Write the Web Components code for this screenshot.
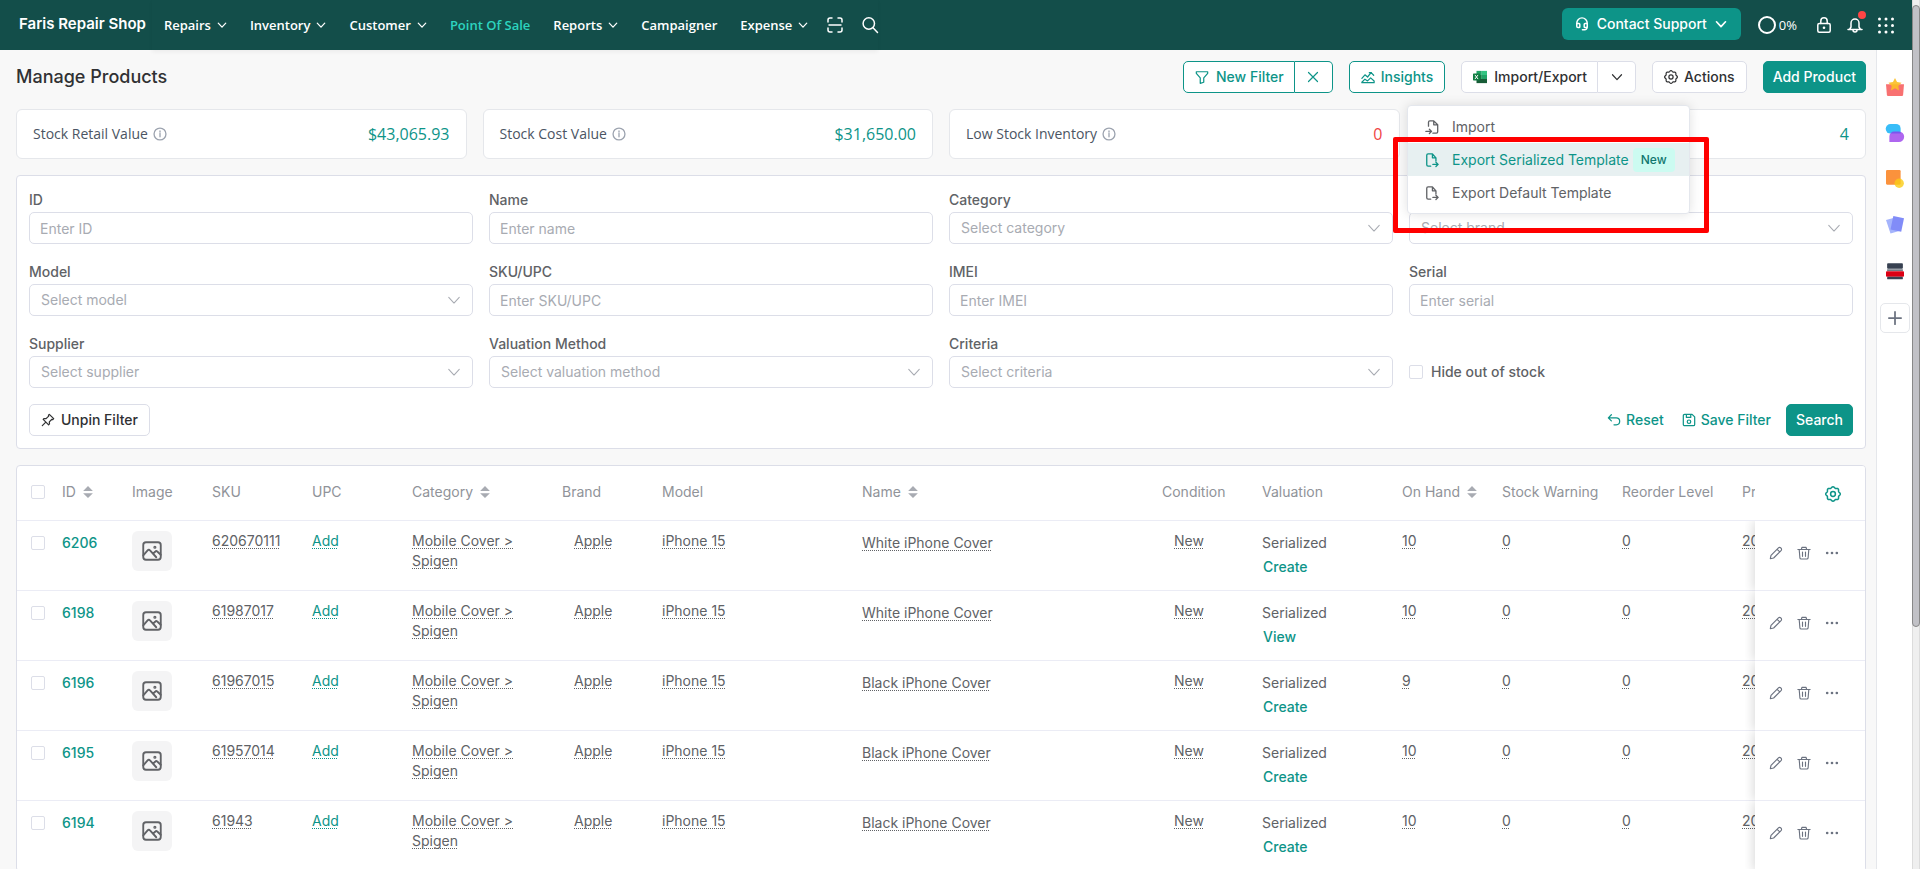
<!DOCTYPE html>
<html lang="en">
<head>
<meta charset="utf-8">
<title>Manage Products</title>
<style>
:root {
  --teal: #0d9488; --head: #134e4a; --line: #dcdee8; --soft: #ebecf5;
  --ink: #303133; --text: #606266; --mute: #909399; --hint: #a8abb2; --page: #f8f8f8;
  --nav-font: "Open Sans", sans-serif;
}
body { margin: 0; font: 14px/20px Inter, sans-serif; color: var(--text); }
</style>
</head>
<body>
<app-shell>
  <app-header slot="header"></app-header>
  <page-toolbar></page-toolbar>
  <stat-row>
    <stat-card label="Stock Retail Value" value="$43,065.93"></stat-card>
    <stat-card label="Stock Cost Value" value="$31,650.00"></stat-card>
    <stat-card label="Low Stock Inventory" value="0" alert></stat-card>
    <stat-card value="4"></stat-card>
  </stat-row>
  <filter-panel></filter-panel>
  <product-table></product-table>
  <app-rail slot="rail"></app-rail>
</app-shell>

<script>
const define = (tag, html, setup) => {
  const tpl = document.createElement('template');
  tpl.innerHTML = '<style>:host,*{box-sizing:border-box}button,input,select{font:inherit;color:inherit;margin:0}button{cursor:pointer}</style>' + html;
  customElements.define(tag, class extends HTMLElement {
    constructor() {
      super();
      this.attachShadow({ mode: 'open' });
    }
    connectedCallback() {
      if (this.shadowRoot.childNodes.length) return;
      this.shadowRoot.append(tpl.content.cloneNode(true));
      if (setup) setup(this, this.shadowRoot);
    }
  });
};

/* wavy outline for the gear */
const gear = (() => {
  let d = '';
  for (let i = 0; i < 72; i++) {
    const a = i * Math.PI / 36, r = 6.7 + 0.6 * Math.cos(8 * a);
    d += (i ? 'L' : 'M') + (8 + r * Math.cos(a)).toFixed(2) + ' ' + (8 + r * Math.sin(a)).toFixed(2);
  }
  return d + 'Z';
})();

const ICONS = {
  down: '<path d="M2 5l6 6.500 6-6.500"/>',
  x: '<path d="M2 2l12 12M14 2l-12 12"/>',
  plus: '<path d="M8 1v14M1 8h14"/>',
  info: '<circle cx="8" cy="8" r="6.800"/><path d="M8 7.200v4M8 4.500v1.200"/>',
  scan: '<path d="M1 5V3a2 2 0 0 1 2-2h2M11 1h2a2 2 0 0 1 2 2v2M15 11v2a2 2 0 0 1-2 2h-2M5 15H3a2 2 0 0 1-2-2v-2M2 8h12"/>',
  search: '<circle cx="6.800" cy="6.500" r="5.700"/><path d="M11 10.700l4.500 4.800"/>',
  funnel: '<path d="M1.500 2h13v1.800L10 9v5l-4 1.200V9L1.500 3.800z"/>',
  chart: '<path d="M1 9.500l3.500-4 3 2.500L11.500 3l3 3M9.500 3h2.500M1 14l3.500-3.500 3 2L11 9l4 3.500v2H1zM1 14.500h14"/>',
  gear: '<path d="' + gear + '"/><circle cx="8" cy="8" r="2.400"/>',
  pin: '<path d="M9.500 1.500l5 5-1 1-1-.3-3 3 .2 2.300-1 1L2.500 7.300l1-1 2.300.2 3-3-.3-1zM5.500 10.500L1.500 14.500"/>',
  reset: '<path d="M5 2L1.500 5.500 5 9M2 5.500h8.500a4 4 0 0 1 0 8H8"/>',
  save: '<path d="M1.500 3a1.500 1.500 0 0 1 1.500-1.500h8.500l3 3V13a1.500 1.500 0 0 1-1.500 1.500H3A1.500 1.500 0 0 1 1.500 13zM5 1.500v3.500h5V1.500"/><circle cx="8" cy="10" r="2"/>',
  image: '<rect x="1" y="1" width="14" height="14" rx="2.200"/><path d="M1 11.500l3.500-4c.6-.7 1.300-.7 1.900 0l5 5.500M9 10l1.700-1.600c.5-.5 1-.4 1.500 0L15 11"/><circle cx="10.300" cy="5" r=".5"/>',
  pencil: '<path d="M1.500 14.500l.8-3.800 8.500-8.500a1.800 1.800 0 0 1 2.600 0l.4.400a1.800 1.800 0 0 1 0 2.600l-8.500 8.500zM9.300 3.800l3 3"/>',
  trash: '<path d="M1 4h14M5 4l.6-2.500h4.800L11 4M2.500 4l.8 9.500c.1.800.6 1.300 1.400 1.300h6.600c.8 0 1.300-.5 1.400-1.300l.8-9.500M6.300 6.800v5M9.700 6.800v5"/>',
  dots: '<g fill="currentColor" stroke="none"><circle cx="2.500" cy="8" r="1.500"/><circle cx="8" cy="8" r="1.500"/><circle cx="13.500" cy="8" r="1.500"/></g>',
  sort: '<g fill="currentColor" stroke="none"><path d="M8 0l6.500 6.500h-13zM8 16l6.500-6.500h-13z"/></g>',
  fileIn: '<path d="M4 7V2.500A1.500 1.500 0 0 1 5.500 1H10l4.500 4.500v8A1.500 1.500 0 0 1 13 15H9M10 1v4.500h4.500M1 13h6M5 10.500L7.500 13 5 15.500"/>',
  fileOut: '<path d="M6.500 15H3.500A1.500 1.500 0 0 1 2 13.500v-11A1.500 1.500 0 0 1 3.500 1H8.500l4 4.500V9M8.500 1v4.500h4M9 13h6M12.500 10.500L15 13l-2.500 2.500"/>',
  support: '<path d="M2 10V7a6 6 0 0 1 12 0v4.500a3 3 0 0 1-3 3H8.500M2 7.500h2.500a1 1 0 0 1 1 1V11a1 1 0 0 1-1 1H3.500A1.500 1.500 0 0 1 2 10.500zM14 7.500h-2.500a1 1 0 0 0-1 1V11a1 1 0 0 0 1 1h1a1.500 1.500 0 0 0 1.500-1.500z"/>',
  lock: '<rect x="1.800" y="6.500" width="12.400" height="8.700" rx="1.500"/><path d="M4.800 6.500V4a3.200 3.200 0 0 1 6.400 0v2.500"/><circle cx="8" cy="10.800" r="1.300" fill="currentColor" stroke="none"/>',
  bell: '<path d="M1 12.500h14M2.500 12.500L4 10V6a4 4 0 0 1 8 0v4l1.500 2.500M6 13a2 2 0 0 0 4 0"/>',
  apps: '<g fill="currentColor" stroke="none">' + [2, 8.500, 15].map(y => [1.5, 8, 14.500].map(x => '<circle cx="' + x + '" cy="' + y + '" r="1.500"/>').join('')).join('') + '</g>',
  excel: '<g stroke="none"><path fill="#21a366" d="M4 1h6v4.700H4z"/><path fill="#33c481" d="M10 1h6v4.700h-6z"/><path fill="#107c41" d="M4 5.700h6v4.600H4z"/><path fill="#21a366" d="M10 5.700h6v4.600h-6z"/><path fill="#185c37" d="M4 10.300h12V15H4z"/><rect fill="#107c41" x="0" y="4" width="8" height="8" rx=".8"/><path stroke="#fff" stroke-width="1.100" d="M2.500 6l3 4M5.500 6l-3 4"/></g>',
  gift: '<g stroke="none"><path fill="#f87171" d="M0 5.500h16l-.8 9.500q-.1 1-1 1H1.800q-.9 0-1-1z"/><path fill="#fbbf24" opacity=".9" d="M8 0l1.800 3.600 4 .6-2.900 2.800.7 4L8 9.100 4.400 11l.7-4L2.200 4.200l4-.6z"/></g>',
  chat: '<g stroke="none"><path fill="#38bdf8" d="M4 0h5a4 4 0 0 1 4 4v4.500H4A4.200 4.200 0 0 1 4 0z"/><path fill="#9333ea" opacity=".75" d="M3 16v-5a4.300 4.300 0 0 1 4.300-4.300h4.200a4.600 4.600 0 0 1 0 9.300z"/></g>',
  note: '<g stroke="none"><rect fill="#fb923c" width="13" height="13" rx="1"/><circle fill="#facc15" opacity=".8" cx="11.700" cy="11.800" r="4.200"/></g>',
  cards: '<g stroke="none"><path fill="#a5b4fc" d="M0 3.500L9 1l3.500 12L4 15.500z"/><path fill="#818cf8" d="M6.500 0L16 2l-2.500 12L4 12z"/></g>',
  stack: '<g stroke="none"><rect fill="#374151" x="1" y="1" width="14" height="5" rx=".8"/><rect fill="#4b5563" x="1" y="6.600" width="14" height="1.200"/><rect fill="#dc0014" x="0" y="8.300" width="16" height="4.700" rx=".8"/><rect fill="#374151" x="1" y="13.200" width="14" height="2.200" rx=".8"/></g>'
};
define('ui-icon', '<style>:host{display:inline-flex;flex:none;width:14px;height:14px}svg{width:100%;height:100%;fill:none;stroke:currentColor;stroke-width:var(--stroke,1.3);stroke-linecap:round;stroke-linejoin:round;overflow:visible}</style><svg viewBox="0 0 16 16" aria-hidden="true"></svg>',
  (el, root) => { root.querySelector('svg').innerHTML = ICONS[el.getAttribute('name')]; });

define('app-shell', `<style>
:host{display:grid;grid-template-columns:minmax(0,1fr) auto 8px;grid-template-rows:auto minmax(0,1fr);height:100vh;overflow:hidden;background:var(--page)}
slot[name=header]{display:block;grid-column:1/3}
main{display:flex;flex-direction:column;gap:16px;padding:11px 10px 0 16px;overflow:hidden}
slot[name=rail]{display:block}
.bar{grid-column:3;grid-row:1/3;background:#efefef;border:1px solid #dcdcdc;border-width:0 1px;padding-top:5px}
.thumb{height:72%;background:#c1c1c6;border:1px solid #888;border-radius:4px;margin:0 -1px}
</style>
<slot name="header"></slot><main><slot></slot></main><slot name="rail"></slot>
<div class="bar"><div class="thumb"></div></div>`);

define('nav-item', `<style>
:host{display:flex}
a{display:flex;align-items:center;gap:6px;color:#fff;text-decoration:none;font:600 13px/18px var(--nav-font);white-space:nowrap}
:host([active]) a{color:#2dd4bf}
ui-icon{width:10px;height:10px;--stroke:2}
</style><a href="#"><slot></slot><ui-icon name="down"></ui-icon></a>`,
  (el, root) => { if (!el.hasAttribute('menu')) root.querySelector('ui-icon').remove(); });

define('app-header', `<style>
:host{display:flex;align-items:stretch;height:50px;background:var(--head);color:#fff}
.brand{display:flex;align-items:center;padding:0 6px 2px 19px;color:#fff;text-decoration:none;font-size:15px;font-weight:600;white-space:nowrap}
nav{display:flex;align-items:center;gap:23px;padding:0 0 0 12px;box-shadow:0 2px 4px rgba(0,0,0,.05)}
.tool{display:flex;padding:0;border:0;background:none;color:#fff}
.tool ui-icon{width:16px;height:16px;--stroke:1.5}
nav .tool{margin-left:-4px}
.right{display:flex;align-items:center;gap:15px;margin-left:auto;padding-right:18px}
.support{display:flex;align-items:center;gap:8px;height:32px;margin:0 2px 2px 0;padding:0 14px 0 13px;border:0;border-radius:6px;background:var(--teal);color:#fff;font-weight:500}
.support ui-icon{--stroke:1.7}
.support ui-icon:last-child{width:12px;height:12px;--stroke:2.2}
.pct{display:flex;align-items:center;gap:3px;margin-right:4px;font:13px/18px var(--nav-font)}
.ring{width:18px;height:18px;border:2px solid #fff;border-radius:50%}
.bell{position:relative}
.bell i{position:absolute;top:-6px;right:-3px;width:8px;height:8px;border-radius:50%;background:#ff4545}
</style>
<a class="brand" href="#">Faris Repair Shop</a>
<nav>
<nav-item menu>Repairs</nav-item><nav-item menu>Inventory</nav-item><nav-item menu>Customer</nav-item>
<nav-item active>Point Of Sale</nav-item><nav-item menu>Reports</nav-item><nav-item>Campaigner</nav-item><nav-item menu>Expense</nav-item>
<button class="tool" aria-label="Scan"><ui-icon name="scan"></ui-icon></button>
<button class="tool" aria-label="Search"><ui-icon name="search"></ui-icon></button>
</nav>
<div class="right">
<button class="support"><ui-icon name="support"></ui-icon>Contact Support<ui-icon name="down"></ui-icon></button>
<span class="pct"><span class="ring"></span>0%</span>
<button class="tool" aria-label="Lock"><ui-icon name="lock"></ui-icon></button>
<button class="tool bell" aria-label="Notifications"><ui-icon name="bell"></ui-icon><i></i></button>
<button class="tool" aria-label="Apps"><ui-icon name="apps"></ui-icon></button>
</div>`);

/* variants: outline, plain (default), primary, text; group="start|end" joins two buttons */
define('ui-button', `<style>
:host{display:flex}
button{display:flex;align-items:center;justify-content:center;gap:6px;height:32px;padding:0 11px;border:1px solid var(--line);border-radius:5px;background:#fff;color:var(--ink);font-weight:500;white-space:nowrap}
::slotted(ui-icon){--stroke:1.4}
:host([variant=outline]) button{border-color:var(--teal);color:var(--teal)}
:host([variant=primary]) button{padding:0 9px;border-color:var(--teal);background:var(--teal);color:#fff}
:host([variant=text]) button{gap:5px;padding:0;border:0;background:none;color:var(--teal)}
:host([group=start]) button{gap:7px;border-radius:5px 0 0 5px;padding-right:10px}
:host([group=end]) button{width:38px;padding:0;border-left:0;border-radius:0 5px 5px 0}
</style><button><slot></slot></button>`,
  (el, root) => { const l = el.getAttribute('label'); if (l) root.querySelector('button').setAttribute('aria-label', l); });

define('export-menu', `<style>
:host{display:block;padding:4px 0;background:#fff;border:1px solid #e4e7ed;border-radius:4px;box-shadow:0 0 12px rgba(0,0,0,.12)}
button{display:flex;align-items:center;width:100%;height:33px;padding:0 16px 0 17px;border:0;background:none;color:var(--text);text-align:left;white-space:nowrap}
ui-icon{margin-right:13px;width:14px;height:14px;--stroke:1.5}
.on{background:#e7f0f1;color:var(--teal)}
.tag{margin-left:4px;padding:2px 8px;border-radius:4px;background:#ccfbf1;color:#0f766e;font-size:12px;font-weight:500}
.mark{position:absolute;left:-15px;right:-20px;top:31px;height:96px;border:5px solid #f00;border-radius:2px;pointer-events:none}
</style>
<button><ui-icon name="fileIn"></ui-icon>Import</button>
<button class="on"><ui-icon name="fileOut"></ui-icon>Export Serialized Template<span class="tag">New</span></button>
<button><ui-icon name="fileOut"></ui-icon>Export Default Template</button>
<div class="mark"></div>`);

define('page-toolbar', `<style>
:host{display:flex;align-items:center;justify-content:space-between}
h1{margin:0;font-size:18px;line-height:24px;font-weight:500;color:var(--ink)}
.acts,.group{display:flex}
.acts{gap:16px}
.group{position:relative}
export-menu{position:absolute;z-index:5;top:44px;right:-54px;width:283px}
.x{width:12px;height:12px;--stroke:1.6}
</style>
<h1>Manage Products</h1>
<div class="acts">
<div class="group"><ui-button variant="outline" group="start"><ui-icon name="funnel"></ui-icon>New Filter</ui-button><ui-button variant="outline" group="end" label="Clear filter"><ui-icon class="x" name="x"></ui-icon></ui-button></div>
<ui-button variant="outline"><ui-icon name="chart"></ui-icon>Insights</ui-button>
<div class="group"><ui-button group="start"><ui-icon name="excel"></ui-icon>Import/Export</ui-button><ui-button group="end" label="Import and export options"><ui-icon class="x" name="down"></ui-icon></ui-button><export-menu></export-menu></div>
<ui-button><ui-icon name="gear"></ui-icon>Actions</ui-button>
<ui-button variant="primary">Add Product</ui-button>
</div>`);

define('stat-row', '<style>:host{display:grid;grid-template-columns:repeat(4,minmax(0,1fr));gap:16px}</style><slot></slot>');
define('stat-card', `<style>
:host{display:flex;align-items:center;justify-content:space-between;height:50px;padding:0 16px;background:#fff;border:1px solid #e5e7eb;border-radius:6px;font-family:var(--nav-font)}
.label{display:flex;align-items:center;gap:5px;color:#4b5563}
ui-icon{color:#9ca3af;--stroke:1.5}
b{margin-left:auto;font-size:16px;font-weight:400;color:var(--teal)}
:host([alert]) b{color:#ef4444}
</style><span class="label"><span></span><ui-icon name="info"></ui-icon></span><b></b>`,
  (el, root) => {
    const l = el.getAttribute('label');
    if (l) root.querySelector('.label span').textContent = l; else root.querySelector('.label').remove();
    root.querySelector('b').textContent = el.getAttribute('value');
  });

const fieldCss = `<style>
:host{display:block}
label{display:block;line-height:24px;font-weight:500;color:var(--text)}
.box{display:grid;align-items:center}
.box>*{grid-area:1/1}
input,select{width:100%;height:32px;padding:0 10px;border:1px solid var(--line);border-radius:5px;background:#fff;outline:0}
select{appearance:none;padding:0 11px;color:var(--hint)}
input::placeholder{color:var(--hint);opacity:1}
ui-icon{justify-self:end;margin-right:12px;width:14px;height:14px;--stroke:1.2;color:var(--hint);pointer-events:none}
</style>`;
define('text-field', fieldCss + '<label for="f"></label><div class="box"><input id="f" type="text"></div>', (el, root) => {
  root.querySelector('label').textContent = el.getAttribute('label');
  root.querySelector('input').placeholder = el.getAttribute('hint');
});
define('select-field', fieldCss + '<label for="f"></label><div class="box"><select id="f"><option></option></select><ui-icon name="down"></ui-icon></div>', (el, root) => {
  root.querySelector('label').textContent = el.getAttribute('label');
  root.querySelector('option').textContent = el.getAttribute('hint');
});
const checkCss = 'input[type=checkbox]{appearance:none;flex:none;width:14px;height:14px;border:1px solid var(--line);border-radius:2px;background:#fff}';
define('check-field', `<style>:host{display:flex;align-items:center;height:32px;font-weight:500}label{display:flex;align-items:center;gap:8px}${checkCss}</style><label><input type="checkbox"><slot></slot></label>`);

define('filter-panel', `<style>
:host{display:block;padding:12px;background:#fff;border:1px solid var(--line);border-radius:4px}
form{display:grid;grid-template-columns:repeat(4,minmax(0,1fr));gap:16px;align-items:end}
.foot{display:flex;align-items:center;justify-content:space-between;margin-top:16px}
.foot div{display:flex;gap:15px}
.foot div ui-button:first-child{margin-right:3px}
</style>
<form>
<text-field label="ID" hint="Enter ID"></text-field><text-field label="Name" hint="Enter name"></text-field>
<select-field label="Category" hint="Select category"></select-field><select-field label="Brand" hint="Select brand"></select-field>
<select-field label="Model" hint="Select model"></select-field><text-field label="SKU/UPC" hint="Enter SKU/UPC"></text-field>
<text-field label="IMEI" hint="Enter IMEI"></text-field><text-field label="Serial" hint="Enter serial"></text-field>
<select-field label="Supplier" hint="Select supplier"></select-field><select-field label="Valuation Method" hint="Select valuation method"></select-field>
<select-field label="Criteria" hint="Select criteria"></select-field><check-field>Hide out of stock</check-field>
</form>
<div class="foot">
<ui-button><ui-icon name="pin"></ui-icon>Unpin Filter</ui-button>
<div>
<ui-button variant="text"><ui-icon name="reset"></ui-icon>Reset</ui-button>
<ui-button variant="text"><ui-icon name="save"></ui-icon>Save Filter</ui-button>
<ui-button variant="primary">Search</ui-button>
</div>
</div>`);

const ROWS = [
  ['6206', '620670111', 'White', 'Create', '10'],
  ['6198', '61987017', 'White', 'View', '10'],
  ['6196', '61967015', 'Black', 'Create', '9'],
  ['6195', '61957014', 'Black', 'Create', '10'],
  ['6194', '61943', 'Black', 'Create', '10']
];
const COLS = [['', 33], ['ID', 70, 1], ['Image', 80], ['SKU', 100], ['UPC', 100], ['Category', 150, 1], ['Brand', 100], ['Model', 200], ['Name', 300, 1], ['Condition', 100], ['Valuation', 140], ['On Hand', 100, 1], ['Stock Warning', 120], ['Reorder Level', 120], ['Price', 120], ['', 110]];
define('product-table', `<style>
:host{display:block;flex:none;background:#fff;border:1px solid var(--line);border-radius:4px;overflow:hidden}
.scroll{overflow-x:auto;scrollbar-width:none}
table{table-layout:fixed;border-spacing:0}
th,td{padding:10px 0 0 12px;border-bottom:1px solid var(--soft);text-align:left;vertical-align:top}
th{height:55px;padding:0 0 2px 12px;vertical-align:middle;font-weight:400;color:var(--mute);white-space:nowrap}
th:first-child,td:first-child{padding-left:14px}
td{height:70px}
.sort{display:inline-flex;align-items:center;gap:6px}
.sort ui-icon{width:12px;height:12px;color:#a8abb2}
.l{display:flex;align-items:center;min-height:24px}
.in{padding-left:24px}
a{color:var(--teal);text-decoration:none}
.id,.go{font-weight:500}
.go{padding-left:1px}
.u{text-decoration:underline dotted 1px;text-underline-offset:2px;text-decoration-skip-ink:none}
.name{line-height:24px}
.pic{display:flex;align-items:center;justify-content:center;width:40px;height:40px;border-radius:6px;background:#f4f4f5}
.pic ui-icon{width:20px;height:20px;--stroke:1.5}
.act{position:sticky;right:0;background:#fff;vertical-align:middle;padding:0}
td.act{box-shadow:-2px 0 10px rgba(0,0,0,.14);clip-path:inset(0 0 0 -10px)}
.act div{display:flex;align-items:center;gap:14px;padding:0 0 6px 14px}
.act button{display:flex;padding:0;border:0;background:none;color:#6b7280}
.act .cfg{margin:2px 0 0 70px;color:var(--teal)}
.cfg ui-icon{width:16px;height:16px;--stroke:1.5}
${checkCss}
</style><div class="scroll"><table><colgroup></colgroup><thead><tr></tr></thead><tbody></tbody></table></div>`, (el, root) => {
  root.querySelector('colgroup').innerHTML = COLS.map(c => `<col style="width:${c[1]}px">`).join('');
  root.querySelector('table').style.width = COLS.reduce((s, c) => s + c[1], 0) + 'px';
  root.querySelector('thead tr').innerHTML = COLS.map(([n, w, s], i) =>
    i === 0 ? '<th><div class="l"><input type="checkbox" aria-label="Select all"></div></th>'
    : i === COLS.length - 1 ? '<th class="act"><button class="cfg" aria-label="Columns"><ui-icon name="gear"></ui-icon></button></th>'
    : s ? `<th><span class="sort">${n}<ui-icon name="sort"></ui-icon></span></th>` : `<th>${n}</th>`).join('');
  root.querySelector('tbody').innerHTML = ROWS.map(([id, sku, color, go, qty]) => `<tr>
<td><div class="l"><input type="checkbox" aria-label="Select ${id}"></div></td>
<td><a class="l id" href="#">${id}</a></td>
<td><span class="pic"><ui-icon name="image"></ui-icon></span></td>
<td><span class="u">${sku}</span></td>
<td><a class="u" href="#">Add</a></td>
<td><span class="u">Mobile Cover &gt; Spigen</span></td>
<td class="in"><span class="u">Apple</span></td>
<td><span class="u">iPhone 15</span></td>
<td class="name"><span class="u">${color} iPhone Cover</span></td>
<td class="in"><span class="u">New</span></td>
<td><span class="l">Serialized</span><a class="l go" href="#">${go}</a></td>
<td><span class="u">${qty}</span></td>
<td><span class="u">0</span></td>
<td><span class="u">0</span></td>
<td><span class="u">200</span></td>
<td class="act"><div><button aria-label="Edit"><ui-icon name="pencil"></ui-icon></button><button aria-label="Delete"><ui-icon name="trash"></ui-icon></button><button aria-label="More"><ui-icon name="dots"></ui-icon></button></div></td>
</tr>`).join('');
});

define('app-rail', `<style>
:host{display:flex;flex-direction:column;align-items:center;gap:26px;width:36px;height:100%;padding:27px 0 0 1px;background:#fff;border-left:1px solid #e5e7eb}
button{display:flex;align-items:center;justify-content:center;padding:0;border:0;background:none}
.i{width:20px;height:20px}
ui-icon{width:18px;height:18px}
.add{width:30px;height:30px;border:1px solid #e5e7eb;border-radius:5px;color:#6b7280;margin-top:-4px}
.add ui-icon{width:14px;height:14px;--stroke:2}
</style>
<button class="i" aria-label="Rewards"><ui-icon name="gift"></ui-icon></button>
<button class="i" aria-label="Chat"><ui-icon name="chat"></ui-icon></button>
<button class="i" aria-label="Notes"><ui-icon name="note"></ui-icon></button>
<button class="i" aria-label="Cards"><ui-icon name="cards"></ui-icon></button>
<button class="i" aria-label="Register"><ui-icon name="stack"></ui-icon></button>
<button class="add" aria-label="Add"><ui-icon name="plus"></ui-icon></button>`);
</script>
</body>
</html>
